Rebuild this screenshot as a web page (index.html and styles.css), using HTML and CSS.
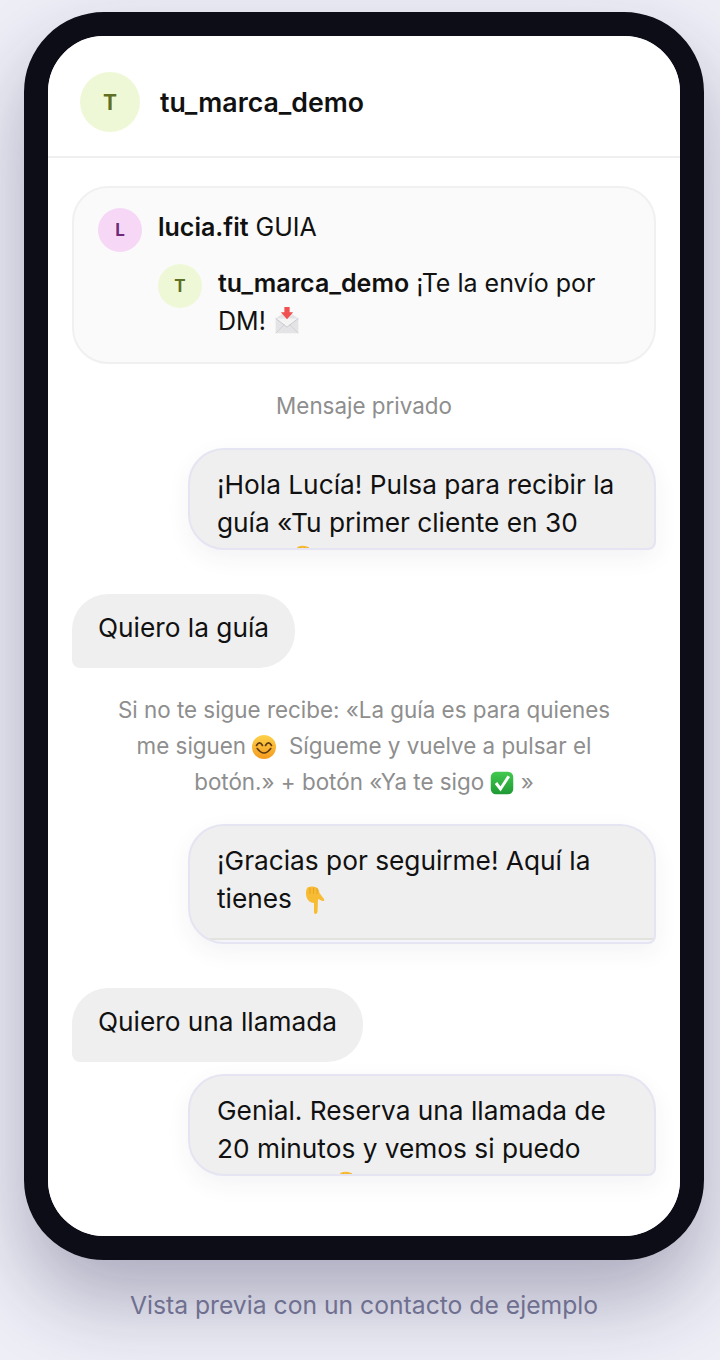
FILE: index.html
```html
<html>
<head>
    <link rel="stylesheet" href="styles.css">
    <title>Vista previa</title>
</head>
<body>
    <svg class="defs" width="0" height="0">
        <defs>
            <linearGradient id="smile-fill" x1="0" y1="0" x2="0" y2="1">
                <stop offset="0" stop-color="#fdd24a"/>
                <stop offset="1" stop-color="#f59a1f"/>
            </linearGradient>
            <linearGradient id="check-fill" x1="0" y1="0" x2="0" y2="1">
                <stop offset="0" stop-color="#43c94f"/>
                <stop offset="1" stop-color="#1f9a34"/>
            </linearGradient>
        </defs>
        <symbol id="finger" viewBox="0 0 20 28">
            <path d="M2.500 1.500 Q7 -0.500 11.500 1.500 Q14 3 14.500 7 L19 13 Q20 15.500 17.500 15 L13 13 L12.500 26 Q12 28 10.500 28 Q9 28 9 26 V17 Q3 16.500 1.500 11 Q0 5 2.500 1.500 Z" fill="#f7bc34"/>
            <path d="M5 2 V8 M8.500 2 V8 M12 2 V8" stroke="#dc9a1c" stroke-width=".7" fill="none"/>
        </symbol>
    </svg>
    <div class="phone">
        <div class="screen">
            <div class="header">
                <div class="avatar avatar-brand avatar-big">T</div>
                <div class="header-name">tu_marca_demo</div>
            </div>
            <div class="chat">
                <div class="post">
                    <div class="comment">
                        <div class="avatar avatar-user">L</div>
                        <div class="comment-text"><b>lucia.fit</b> GUIA</div>
                    </div>
                    <div class="comment comment-reply">
                        <div class="avatar avatar-brand">T</div>
                        <div class="comment-text"><b>tu_marca_demo</b> ¡Te la envío por DM!
                            <svg class="emoji" viewBox="0 0 32 32">
                                <path d="M3 13 L16 4 L29 13 V30 H3 Z" fill="#e4e4e6"/>
                                <path d="M3 13 L16 23 L29 13" fill="#f4f4f5" stroke="#c4c4c8" stroke-width="1"/>
                                <path d="M3 30 L13 20 M29 30 L19 20" stroke="#cfcfd3" stroke-width="1"/>
                                <path d="M13 0 H19 V6 H23 L16 14 L9 6 H13 Z" fill="#f0504f"/>
                            </svg>
                        </div>
                    </div>
                </div>
                <div class="label">Mensaje privado</div>
                <div class="bubble bubble-out bubble-clip">¡Hola Lucía! Pulsa para recibir la guía «Tu primer cliente en 30 días»
                    <svg class="emoji emoji-peek"><use href="#finger"/></svg>
                </div>
                <div class="bubble bubble-in bubble-first">Quiero la guía</div>
                <div class="note">Si no te sigue recibe: «La guía es para quienes me siguen
                    <svg class="emoji emoji-small" viewBox="0 0 32 32">
                        <circle cx="16" cy="16" r="16" fill="url(#smile-fill)"/>
                        <path d="M6 14 Q10 7 14 14 M18 14 Q22 7 26 14" fill="none" stroke="#5d3a10" stroke-width="2.200" stroke-linecap="round"/>
                        <path d="M7 18 Q16 30 25 18" fill="none" stroke="#5d3a10" stroke-width="2.200" stroke-linecap="round"/>
                    </svg>
                    &nbsp;Sígueme y vuelve a pulsar el botón.» + botón «Ya te sigo
                    <svg class="emoji emoji-small" viewBox="0 0 32 32">
                        <rect x="1" y="1" width="30" height="30" rx="7" fill="url(#check-fill)"/>
                        <path d="M8 16 L14 24 L25 7" fill="none" stroke="#fff" stroke-width="4"/>
                    </svg>
                    »</div>
                <div class="bubble bubble-out bubble-button">¡Gracias por seguirme! Aquí la tienes
                    <svg class="emoji emoji-hand"><use href="#finger"/></svg>
                    <div class="button-edge"></div>
                </div>
                <div class="bubble bubble-in bubble-second">Quiero una llamada</div>
                <div class="bubble bubble-out bubble-clip bubble-near">Genial. Reserva una llamada de 20 minutos y vemos si puedo ayudarte
                    <svg class="emoji emoji-peek"><use href="#finger"/></svg>
                </div>
            </div>
        </div>
    </div>
    <div class="caption">Vista previa con un contacto de ejemplo</div>
</body>
</html>
```

FILE: styles.css
```css
body {
    margin: 0;
    height: 1360px;
    overflow: hidden;
    background-color: #eeeef7;
    font-family: Inter, "Noto Sans", sans-serif;
    color: #111;
}

.defs {
    display: block;
}

.phone {
    width: 632px;
    height: 1200px;
    margin: 12px 0 0 24px;
    border: 24px solid #0d0d18;
    border-radius: 80px;
    box-shadow: 0 40px 80px rgba(30, 30, 70, 0.32);
}

.screen {
    height: 1200px;
    border-radius: 56px;
    background-color: white;
    overflow: hidden;
}

.header {
    display: flex;
    align-items: center;
    gap: 20px;
    height: 108px;
    padding: 12px 32px 0;
    border-bottom: 2px solid #efefef;
}

.header-name {
    font-size: 26.7px;
    font-weight: 600;
}

.avatar {
    display: flex;
    align-items: center;
    justify-content: center;
    flex-shrink: 0;
    width: 44px;
    height: 44px;
    border-radius: 50%;
    font-size: 17px;
    font-weight: 700;
}

.avatar-big {
    width: 60px;
    height: 60px;
    font-size: 21px;
}

.avatar-brand {
    background-color: #eff8d6;
    color: #5f6f24;
}

.avatar-user {
    background-color: #f6d8f6;
    color: #6f2a78;
}

.chat {
    display: flex;
    flex-direction: column;
    gap: 24px;
    padding: 28px 24px;
}

.post {
    padding: 20px 24px 22px;
    border: 2px solid #f0f0f0;
    border-radius: 36px;
    background-color: #fafafa;
}

.comment {
    display: flex;
    gap: 16px;
    font-size: 25px;
    line-height: 38px;
}

.comment-reply {
    margin: 12px 0 0 60px;
}

.comment b {
    font-weight: 600;
}

.emoji {
    width: 28px;
    height: 28px;
    vertical-align: -5px;
}

.emoji-small {
    width: 24px;
    height: 24px;
}

.emoji-hand {
    width: 20px;
    height: 28px;
    margin-left: 6px;
    vertical-align: -6px;
}

.emoji-peek {
    width: 22px;
    height: 31px;
    margin-left: 4px;
    vertical-align: -6px;
}

.label {
    text-align: center;
    color: #8e8e8e;
    font-size: 22.4px;
    line-height: 36px;
}

.bubble {
    font-size: 26.25px;
    line-height: 38px;
    background-color: #efefef;
}

.bubble-out {
    align-self: flex-end;
    box-sizing: border-box;
    width: 468px;
    padding: 16px 27px;
    border: 2px solid #e4e4f2;
    border-radius: 36px 36px 8px 36px;
    box-shadow: 0 8px 24px rgba(50, 50, 93, 0.06);
    overflow: hidden;
}

.bubble-clip {
    height: 102px;
}

.bubble-in {
    align-self: flex-start;
    padding: 15px 26px 21px;
    border-radius: 36px 36px 36px 8px;
}

.bubble-first {
    margin-top: 20px;
}

.bubble-second {
    margin-top: 20px;
}

.bubble-near {
    margin-top: -12px;
}

.bubble-button {
    height: 120px;
}

.button-edge {
    height: 2px;
    margin: 20px -27px 0;
    border-bottom: 4px solid #f4f4fa;
    background-color: #e3e3de;
}

.note {
    padding: 0 32px;
    text-align: center;
    color: #8e8e8e;
    font-size: 22.4px;
    line-height: 36px;
}

.caption {
    margin-top: 30px;
    margin-left: 24px;
    width: 680px;
    text-align: center;
    color: #6f6f8f;
    font-size: 24.7px;
}
```
